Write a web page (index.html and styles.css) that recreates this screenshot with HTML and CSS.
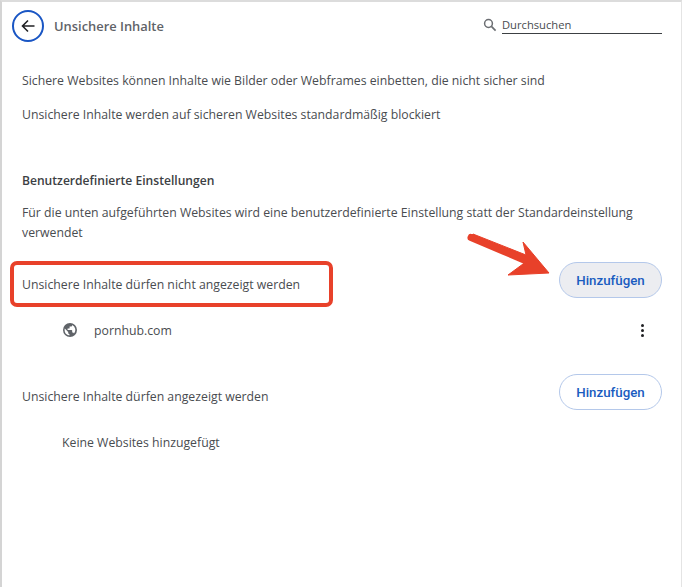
FILE: index.html
```html
<!DOCTYPE html>
<html lang="de">
<head>
  <meta charset="UTF-8">
  <meta name="viewport" content="width=device-width, initial-scale=1.0">
  <title>Unsichere Inhalte</title>
  <link rel="stylesheet" href="styles.css">
</head>
<body>
  <main class="page">
    <header class="topbar">
      <div class="topbar-left">
        <button class="back-btn" aria-label="Zurück">
          <svg width="16" height="16" viewBox="0 0 16 16"><path d="M14.5 8H2.500M8 2.500L2.500 8L8 13.500" fill="none" stroke="#202124" stroke-width="1.6"/></svg>
        </button>
        <h1 class="page-title">Unsichere Inhalte</h1>
      </div>
      <div class="search">
        <svg class="search-icon" width="14" height="14" viewBox="0 0 14 14"><circle cx="5.5" cy="5.5" r="3.9" fill="none" stroke="#6b6e72" stroke-width="1.5"/><path d="M8.4 8.4L12.6 12.6" stroke="#6b6e72" stroke-width="1.7"/></svg>
        <div class="search-field">Durchsuchen</div>
      </div>
    </header>

    <p class="line first">Sichere Websites können Inhalte wie Bilder oder Webframes einbetten, die nicht sicher sind</p>
    <p class="line second">Unsichere Inhalte werden auf sicheren Websites standardmäßig blockiert</p>

    <h2 class="section-title">Benutzerdefinierte Einstellungen</h2>
    <p class="section-desc">Für die unten aufgeführten Websites wird eine benutzerdefinierte Einstellung statt der Standardeinstellung verwendet</p>

    <section class="list-head blocked">
      <span>Unsichere Inhalte dürfen nicht angezeigt werden</span>
      <button class="add-btn hovered">Hinzufügen</button>
    </section>
    <div class="site-row">
      <svg class="globe" width="16" height="16" viewBox="0 0 16 16"><path fill="#5f6368" fill-rule="evenodd" d="M8 1a7 7 0 1 0 0 14A7 7 0 0 0 8 1zM2.600 8c0-.5.1-1 .2-1.400l3.400 3.400v.8c0 .7.6 1.300 1.200 1.300v1.300A5.400 5.400 0 0 1 2.600 8zm9.400 3.400c-.2-.5-.7-.9-1.200-.9h-.6V8.600c0-.4-.3-.7-.7-.7H5.600V6.600h1.300c.4 0 .7-.3.7-.7V4.600h1.300c.7 0 1.300-.6 1.300-1.300v-.3A5.400 5.400 0 0 1 12 11.400z"/></svg>
      <span class="site-name">pornhub.com</span>
      <button class="more-btn" aria-label="Mehr"><i></i><i></i><i></i></button>
    </div>

    <section class="list-head allowed">
      <span>Unsichere Inhalte dürfen angezeigt werden</span>
      <button class="add-btn">Hinzufügen</button>
    </section>
    <div class="empty-row">Keine Websites hinzugefügt</div>
  </main>

  <!-- annotations on top of the screenshot -->
  <div class="mark-box"></div>
  <svg class="mark-arrow" width="90" height="50" viewBox="0 0 90 50">
    <path d="M4 5L59 29.500L42 42L83 40L57 9L60 22L7 1Z" fill="#e8412a" stroke="#e8412a" stroke-width="1" stroke-linejoin="round"/>
    <path d="M5 4.500L58 27" stroke="#e8412a" stroke-width="7" stroke-linecap="round"/>
  </svg>
</body>
</html>
```

FILE: styles.css
```css
html, body {
  margin: 0;
  padding: 0;
  height: 100%;
  background: #fff;
}
body {
  overflow: hidden;
  position: relative;
  font-family: 'Open Sans', Arial, sans-serif;
  font-size: 12.27px;
  color: #494c50;
}
.page {
  box-sizing: border-box;
  width: 682px;
  height: 587px;
  border-top: 2px solid #dcdcdc;
  border-left: 2px solid #d4d4d4;
  border-right: 1px solid #e4e4e4;
  padding: 0 19px 0 20px;
}
.topbar {
  display: flex;
  justify-content: space-between;
  align-items: center;
  height: 48px;
  margin-left: -10px;
}
.topbar-left {
  display: flex;
  align-items: center;
  gap: 10px;
}
.back-btn {
  display: flex;
  align-items: center;
  justify-content: center;
  width: 32px;
  height: 32px;
  padding: 0;
  background: #fff;
  border: 2px solid #1a56c4;
  border-radius: 50%;
}
.page-title {
  margin: 0;
  font-size: 12.9px;
  font-weight: 600;
  color: #5f6368;
}
.search {
  display: flex;
  align-items: center;
  gap: 5px;
  margin-top: -2px;
}
.search-field {
  width: 160px;
  height: 16px;
  line-height: 15px;
  font-size: 11.2px;
  border-bottom: 1px solid #3c4043;
}
.line {
  margin: 0;
  line-height: 18px;
}
.line.first {
  margin-top: 22px;
}
.line.second {
  margin-top: 16px;
}
.section-title {
  margin: 48px 0 0;
  font-size: 12.1px;
  line-height: 18px;
  font-weight: 600;
  color: #3c4043;
}
.section-desc {
  margin: 13px 0 0;
  line-height: 20px;
}
.list-head {
  display: flex;
  justify-content: space-between;
  align-items: center;
  height: 36px;
}
.list-head.blocked {
  margin-top: 19px;
}
.list-head.blocked span {
  margin-top: 8px;
}
.list-head.allowed {
  margin-top: 24px;
}
.list-head.allowed span {
  margin-top: 8px;
}
.add-btn {
  box-sizing: border-box;
  width: 103px;
  height: 36px;
  padding: 0;
  background: #fff;
  border: 1px solid #b4c8ea;
  border-radius: 18px;
  color: #1a5cc0;
  font-family: Roboto, Arial, sans-serif;
  font-size: 13.3px;
  font-weight: 500;
}
.add-btn.hovered {
  background: #ecedf1;
}
.site-row {
  display: flex;
  align-items: center;
  height: 40px;
  margin-top: 12px;
  padding-left: 40px;
}
.globe {
  margin-right: 16px;
}
.site-name {
  flex: 1;
}
.more-btn {
  display: flex;
  flex-direction: column;
  align-items: center;
  gap: 2px;
  width: 16px;
  margin-right: 12px;
  padding: 0;
  background: none;
  border: none;
}
.more-btn i {
  width: 3px;
  height: 3px;
  border-radius: 50%;
  background: #202124;
}
.empty-row {
  margin-top: 23px;
  padding-left: 40px;
  line-height: 20px;
}
.mark-box {
  position: absolute;
  left: 10px;
  top: 261px;
  width: 315px;
  height: 38px;
  border: 4px solid #e8412a;
  border-radius: 7px;
}
.mark-arrow {
  position: absolute;
  left: 466px;
  top: 233px;
}
```
